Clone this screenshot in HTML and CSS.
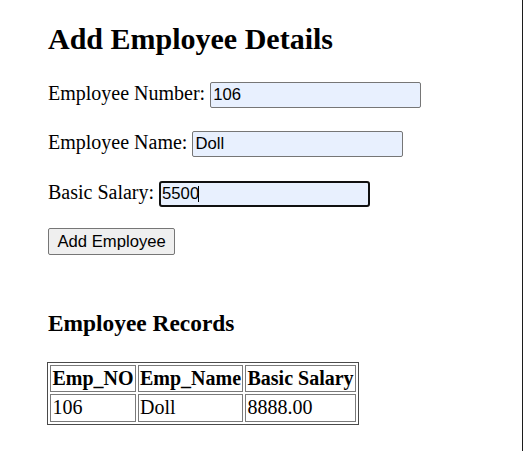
FILE: index.html
```html
<!DOCTYPE html>
<html lang="en">
<head>
<meta charset="utf-8">
<title>Add Employee Details</title>
<link rel="stylesheet" href="styles.css">
</head>
<body>
<div class="page">
  <h1 class="title">Add Employee Details</h1>
  <form class="form">
    <div class="field">Employee Number: <input class="box" type="text" value="106"></div>
    <div class="field">Employee Name: <input class="box" type="text" value="Doll"></div>
    <div class="field">Basic Salary: <span class="focus-wrap"><input class="box box-focused" type="text" value="5500"><span class="caret"></span></span></div>
    <div class="field field-last"><button class="btn" type="button">Add Employee</button></div>
  </form>
  <h3 class="subtitle">Employee Records</h3>
  <table class="records">
    <tr><th>Emp_NO</th><th>Emp_Name</th><th>Basic Salary</th></tr>
    <tr><td>106</td><td>Doll</td><td>8888.00</td></tr>
  </table>
</div>
</body>
</html>
```

FILE: styles.css
```css
html, body {
  margin: 0;
  background: #ffffff;
}

.page {
  box-sizing: border-box;
  width: 523px;
  min-height: 451px;
  padding: 0 0 0 48px;
  border-right: 1px solid #1c1c1c;
  font-family: "Liberation Serif", "Times New Roman", serif;
  font-size: 20px;
  color: #000;
  overflow: hidden;
}

.title {
  font-size: 30px;
  font-weight: bold;
  margin: 21.6px 0 0;
  line-height: normal;
}

.form {
  margin: 24px 0 0;
}

.field {
  height: 26px;
  line-height: 26px;
  margin: 0 0 23.6px;
  white-space: nowrap;
}

.field-last {
  margin-bottom: 0;
}

.box {
  box-sizing: border-box;
  width: 211px;
  height: 26px;
  margin: 0;
  padding: 0 2px;
  border: 1px solid #767676;
  border-radius: 2px;
  background: #e8f0fe;
  font-family: "Liberation Sans", Arial, sans-serif;
  font-size: 16.67px;
  color: #000;
  vertical-align: baseline;
  outline: none;
}

.focus-wrap {
  position: relative;
  display: inline-block;
  line-height: normal;
}

.box-focused {
  border: 2px solid #101010;
  border-radius: 3px;
  padding: 0 1px;
}

.caret {
  position: absolute;
  left: 39px;
  top: 5px;
  width: 1px;
  height: 16px;
  background: #000;
}

.btn {
  box-sizing: border-box;
  height: 26.4px;
  margin: 0;
  padding: 0 8.5px;
  border: 1px solid #767676;
  border-radius: 2px;
  background: #efefef;
  font-family: "Liberation Sans", Arial, sans-serif;
  font-size: 16.67px;
  color: #000;
  vertical-align: top;
}

.subtitle {
  font-size: 23.4px;
  font-weight: bold;
  margin: 55.5px 0 0;
  line-height: normal;
}

.records {
  margin: 25px 0 0 -0.7px;
  border: 1px solid #4a4a4a;
  border-spacing: 2px;
  font-size: 20px;
}

.records th,
.records td {
  border: 1px solid #7a7a7a;
  padding: 1px 1.2px;
  text-align: left;
  line-height: 23.5px;
}

.records th {
  font-weight: bold;
}
```
